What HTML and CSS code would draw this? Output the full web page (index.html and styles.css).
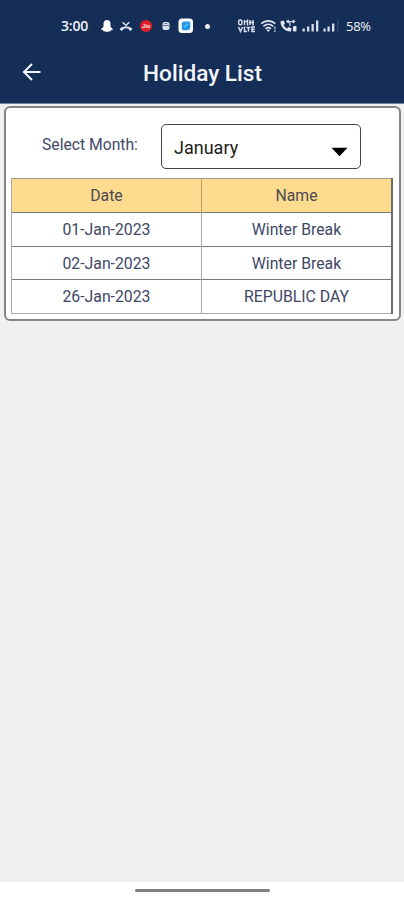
FILE: index.html
```html
<!DOCTYPE html>
<html lang="en">
<head>
<meta charset="utf-8">
<title>Holiday List</title>
<link rel="stylesheet" href="styles.css">
</head>
<body>
<header class="top">
  <div class="status">
    <span class="time">3:00</span>
    <svg class="ghost" width="14" height="14" viewBox="0 0 14 14"><path fill="#fff" d="M7 1C4.800 1 3.500 2.500 3.500 4.600v2.800L2.300 9 .8 10.400l2.300.8.600 1.200 1.700-.1L7 13.200l1.600-.9 1.700.1.600-1.200 2.300-.8L11.700 9l-1.200-1.600V4.600C10.500 2.500 9.200 1 7 1z"/></svg>
    <svg class="missed" width="14" height="14" viewBox="0 0 14 14"><path d="M3.500 3.200 7 6.200l3.300-3" fill="none" stroke="#dfe5f0" stroke-width="1.500"/><path d="M1.700 10.800C4.400 7.300 9.600 7.300 12.300 10.800" fill="none" stroke="#dfe5f0" stroke-width="2"/><path d="m.6 10.100 2-1.800 2 1.600-1.900 2zM13.400 10.100l-2-1.800-2 1.600 1.900 2z" fill="#dfe5f0"/></svg>
    <span class="jio">Jio</span>
    <svg class="mini" width="10" height="12" viewBox="0 0 10 12"><rect x="1.500" y="2" width="7" height="8" rx="2" fill="#d9dfeb"/><path d="M2 5.500h6M3.500 3.500h3" stroke="#6b7891"/></svg>
    <svg class="app" width="16" height="16" viewBox="0 0 16 16"><rect x=".5" y=".5" width="14.500" height="14.500" rx="3.500" fill="#fff"/><path d="M5.500 3.500h4.800q2 0 2 2v3.300q0 3.400-3.500 3.400H5.700q-2 0-2-2V6q0-2 1.800-2.500z" fill="#2196e6"/><path d="m6 9.500 4-4" stroke="#55b9f5" stroke-width="2"/></svg>
    <span class="dot"></span>
    <svg class="volte" width="20" height="16" viewBox="0 0 20 16"><g fill="none" stroke="#d8dfec" stroke-width="1.500"><rect x="1.700" y="2" width="3.200" height="4.700" rx="1.300"/><path d="M7.500 2v5M8.500 3.500h2.400M10.500 1.500v6M13 2v5M12 4.500h5M16 2v5.500M1.500 9l2 4.500 2-4.500M7.500 8.500v5h2.500M9.500 9.500h4M11.500 9.500v4M18 9h-3v4.500h3M14.700 11.200h3"/></g></svg>
    <svg class="wifi" width="19" height="16" viewBox="0 0 19 16"><g fill="none" stroke="#e1e7f1" stroke-width="1.700"><path d="M1.200 5.700C5.300 1.900 11.200 1.900 15.300 5.700M3.400 8.300c2.900-2.600 6.800-2.600 9.700 0M5.600 10.800c1.600-1.400 3.700-1.400 5.300 0"/></g><path d="m6.500 12 1.700 2 1.800-2q-1.700-1.200-3.500 0z" fill="#e1e7f1"/><path d="M14.800 8.500v2.800M14.800 12.200v1.800" stroke="#9aa8c4" stroke-width="1.700"/></svg>
    <svg class="call" width="18" height="15" viewBox="0 0 18 15"><path d="M.5 2.200 3.700 1.500 5 4.700 3.600 6c.8 1.700 1.800 2.700 3.500 3.500L8.500 8l3 1.300-.5 3.200C5.500 12.900.2 8 .5 2.200z" fill="#e1e7f1"/><path d="M6.500 2.500h8M12.700 1l2 1.500-2 1.500M8.800 1 6.800 2.500l2 1.500M10 3v4" fill="none" stroke="#d8dfec" stroke-width="1.200"/><rect x="13" y="7" width="3.500" height="5.500" rx="1" fill="#e1e7f1"/></svg>
    <svg class="sig" width="18" height="14" viewBox="0 0 18 14"><path fill="#d8dfec" d="M.5 9.500h2.300v3H.5zM5 7.500h2.300v5H5zM9.500 5h2.300v7.500H9.500zM14 1.500h2.300v11H14z"/></svg>
    <svg class="sig2" width="18" height="14" viewBox="0 0 18 14"><path fill="#d8dfec" d="M.5 9.500h2.200v3H.5zM4.500 7.500h2.200v5H4.500zM9 4.500h2.300v8H9z"/><path fill="#34496f" d="M14 1.500h1.500v11H14z"/></svg>
    <span class="battery">58%</span>
  </div>
  <div class="bar">
    <svg class="back" width="20" height="20" viewBox="0 0 20 20"><path d="M18.500 10H2.500M10 2 2 10l8 8" fill="none" stroke="#f2f5fa" stroke-width="2.100"/></svg>
    <h1 class="title">Holiday List</h1>
  </div>
</header>
<main class="content">
  <section class="card">
    <div class="filter">
      <span class="label">Select Month:</span>
      <div class="select"><span>January</span><svg width="17" height="10" viewBox="0 0 17 10"><path d="M.5.800h16L8.500 9.300z" fill="#000"/></svg></div>
    </div>
    <div class="table">
      <div class="row head"><span>Date</span><span>Name</span></div>
      <div class="row"><span>01-Jan-2023</span><span>Winter Break</span></div>
      <div class="row"><span>02-Jan-2023</span><span>Winter Break</span></div>
      <div class="row last"><span>26-Jan-2023</span><span>REPUBLIC DAY</span></div>
    </div>
  </section>
</main>
<footer class="nav"><div class="handle"></div></footer>
</body>
</html>
```
FILE: styles.css
```css
* { box-sizing: border-box; }
body {
  margin: 0;
  height: 900px;
  display: flex;
  flex-direction: column;
  background: #f0f0f0;
  font-family: Roboto, sans-serif;
  color: #3e4766;
  overflow: hidden;
}
.top { height: 104px; background: #142e57; border-bottom: 1px solid #73839e; }
.status {
  height: 44px;
  padding: 8px 0 0 61px;
  display: flex;
  align-items: center;
  color: #eef2f8;
}
.status > * { flex: none; }
.time { width: 28px; font: 600 14px/16px "Open Sans", sans-serif; letter-spacing: -0.2px; white-space: nowrap; }
.ghost { margin-left: 11px; }
.missed { margin-left: 5px; }
.jio {
  width: 12px;
  height: 12px;
  margin-left: 7px;
  border-radius: 50%;
  background: #df2029;
  color: #ffe5e5;
  font-size: 6px;
  font-weight: 700;
  line-height: 12px;
  text-align: center;
}
.mini { margin-left: 9px; }
.app { margin-left: 7px; }
.dot { width: 5px; height: 5px; margin-left: 11px; border-radius: 50%; background: #e8edf5; }
.volte { margin-left: 27px; }
.wifi { margin-left: 3px; }
.call { margin-left: 1px; }
.sig { margin-left: 4px; }
.sig2 { margin-left: 3px; }
.battery { margin-left: 5px; font: 500 13px/16px "Open Sans", sans-serif; letter-spacing: -0.3px; }
.bar {
  height: 59px;
  display: grid;
  grid-template-columns: 64px 277px 1fr;
  align-items: center;
}
.back { margin-left: 22px; margin-top: -3px; }
.title { margin: 0; text-align: center; font-size: 22.6px; font-weight: 500; line-height: 30px; color: #f2f5fa; }
.content { flex: 1; padding: 2px 3px 0 4px; }
.card {
  height: 215px;
  padding: 16px 5px 0 6px;
  background: #fff;
  border: 2px solid #868686;
  border-radius: 6px;
}
.filter { display: flex; height: 54px; padding-left: 30px; }
.label { width: 119px; padding-top: 11px; font-size: 15.700px; line-height: 20px; white-space: nowrap; }
.select {
  width: 200px;
  height: 45px;
  padding: 2px 12px 0;
  display: flex;
  align-items: center;
  justify-content: space-between;
  border: 1px solid #444;
  border-radius: 5px;
  font-size: 18px;
  color: #1c1c1c;
}
.select svg { margin-top: 9px; }
.table {
  width: 381px;
  margin-left: -1px;
  border-left: 1px solid #aaa;
  border-right: 2px solid #6c6c70;
  width: 382px;
}
.row {
  display: grid;
  grid-template-columns: 190px 1fr;
  height: 33.5px;
  border-bottom: 1px solid #777;
  font-size: 15.800px;
  line-height: 34px;
  text-align: center;
}
.row span:first-child { border-right: 1px solid #aaa; }
.head { height: 35px; background: #fddb8f; border-top: 1px solid #999; color: #4c4a52; }
.head span:first-child { border-right-color: #b99f69; }
.last { border-bottom-color: #aaa; }
.nav { height: 18px; background: #fff; display: flex; justify-content: center; align-items: flex-start; padding-top: 7px; }
.handle { width: 135px; height: 3px; border-radius: 2px; background: #808080; }
```
